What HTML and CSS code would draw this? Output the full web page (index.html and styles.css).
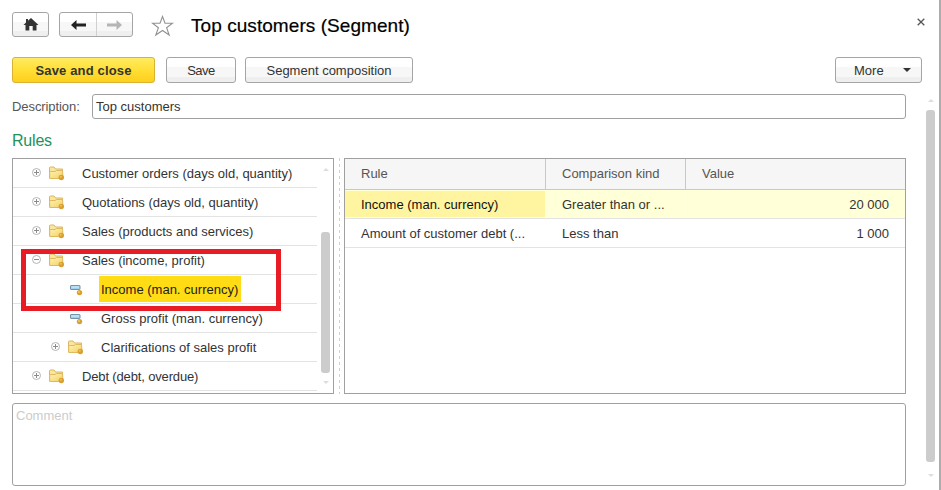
FILE: index.html
```
<!DOCTYPE html>
<html lang="en">
<head>
<meta charset="utf-8">
<title>Top customers (Segment)</title>
<link rel="stylesheet" href="styles.css">
</head>
<body>
<svg class="defs" width="0" height="0" aria-hidden="true">
  <defs>
    <linearGradient id="gold" x1="0" y1="0" x2="1" y2="1"><stop offset="0" stop-color="#fff3b5"/><stop offset="1" stop-color="#f3cf62"/></linearGradient>
    <symbol id="folder" viewBox="0 0 16 15">
      <path d="M.5 12V2Q.5 1 1.500 1H5L6.500 3H13.500V5" fill="#fbe79c" stroke="#d9b565"/>
      <path d="M.7 12.500V6.500Q.8 5.500 2 5.500H6L7.500 4.500H13.500L14 12.500Z" fill="url(#gold)" stroke="#dfb95f"/>
      <circle cx="12.300" cy="11.500" r="2.700" fill="#d9a02f"/><circle cx="11.800" cy="10.800" r="1" fill="#efc15b"/>
    </symbol>
    <symbol id="field" viewBox="0 0 13 11">
      <rect x=".5" y=".5" width="9.500" height="4" rx=".5" fill="#9fd0ef" stroke="#7592a6"/>
      <path d="M1.500 2H9" stroke="#d4eefb"/>
      <circle cx="9.500" cy="7.600" r="2.700" fill="#d9a02f"/><circle cx="9" cy="6.900" r="1" fill="#f0c767"/>
    </symbol>
    <symbol id="plus" viewBox="0 0 9 9"><circle cx="4.500" cy="4.500" r="4" fill="#fff" stroke="#b5b5b5"/><path d="M2 4.500H7M4.500 2V7" stroke="#8c8c8c"/></symbol>
    <symbol id="minus" viewBox="0 0 9 9"><circle cx="4.500" cy="4.500" r="4" fill="#fff" stroke="#b5b5b5"/><path d="M2 4.500H7" stroke="#8c8c8c"/></symbol>
  </defs>
</svg>
<main class="window">
  <div class="form">
    <header class="titlebar">
      <button class="btn home" aria-label="Home"><svg width="16" height="13" viewBox="0 0 16 13"><path d="M8 0L15.500 7H13.500V12.500H9.700V8H6.300V12.500H2.500V7H.5L3 4.600V1H5V2.800Z" fill="#333"/></svg></button>
      <div class="btn history">
        <button aria-label="Back"><svg width="15" height="10" viewBox="0 0 15 10"><path d="M0 5L5.500 0V3.500H15V6.500H5.500V10Z" fill="#222"/></svg></button>
        <button aria-label="Forward"><svg width="15" height="10" viewBox="0 0 15 10"><path d="M15 5L9.500 0V3.500H0V6.500H9.500V10Z" fill="#b5b5b5"/></svg></button>
      </div>
      <svg class="star" width="23" height="22" viewBox="0 0 23 22"><path d="M11.500 1.500L14 8.300H21.500L15.600 12.700L18.200 20L11.500 15.500L4.800 20L7.400 12.700L1.500 8.300H9Z" fill="#fff" stroke="#929292" stroke-width="1.100"/></svg>
      <h1>Top customers (Segment)</h1>
      <svg class="close" width="8" height="8" viewBox="0 0 8 8"><path d="M.7.7L7.300 7.300M7.300.7L.7 7.300" stroke="#555" stroke-width="1.300"/></svg>
    </header>
    <div class="commands">
      <button class="btn primary">Save and close</button>
      <button class="btn save">Save</button>
      <button class="btn compose">Segment composition</button>
      <button class="btn more"><span>More</span><i class="caret"></i></button>
    </div>
    <div class="description"><label>Description:</label><div class="input">Top customers</div></div>
    <h2>Rules</h2>
    <div class="panels">
      <section class="tree">
        <ul>
          <li><svg class="toggle"><use href="#plus"/></svg><svg class="folder"><use href="#folder"/></svg><span>Customer orders (days old, quantity)</span></li>
          <li><svg class="toggle"><use href="#plus"/></svg><svg class="folder"><use href="#folder"/></svg><span>Quotations (days old, quantity)</span></li>
          <li><svg class="toggle"><use href="#plus"/></svg><svg class="folder"><use href="#folder"/></svg><span>Sales (products and services)</span></li>
          <li><svg class="toggle"><use href="#minus"/></svg><svg class="folder"><use href="#folder"/></svg><span>Sales (income, profit)</span></li>
          <li class="leaf"><svg class="field"><use href="#field"/></svg><span class="selected">Income (man. currency)</span></li>
          <li class="leaf"><svg class="field"><use href="#field"/></svg><span>Gross profit (man. currency)</span></li>
          <li class="child"><svg class="toggle"><use href="#plus"/></svg><svg class="folder"><use href="#folder"/></svg><span>Clarifications of sales profit</span></li>
          <li><svg class="toggle"><use href="#plus"/></svg><svg class="folder"><use href="#folder"/></svg><span class="tight">Debt (debt, overdue)</span></li>
        </ul>
        <div class="scroll"><i class="up"></i><b></b><i class="down"></i></div>
        <div class="highlight"></div>
      </section>
      <div class="splitter"></div>
      <section class="table">
        <div class="row head"><div>Rule</div><div>Comparison kind</div><div>Value</div></div>
        <div class="row active"><div>Income (man. currency)</div><div>Greater than or ...</div><div class="num">20 000</div></div>
        <div class="row"><div>Amount of customer debt (...</div><div>Less than</div><div class="num">1 000</div></div>
      </section>
    </div>
    <div class="comment">Comment</div>
  </div>
  <div class="scroll page"><i class="up"></i><b></b><i class="down"></i></div>
</main>
</body>
</html>
```
FILE: styles.css
```
* { box-sizing: border-box; }
body { margin: 0; background: #fff; overflow: hidden; font: 13px/16px "Liberation Sans", Arial, sans-serif; color: #333; }
.defs { position: absolute; }
svg { display: block; flex: none; }
button { font: inherit; color: inherit; padding: 0; margin: 0; border: 0; background: none; }
.window { display: flex; width: 941px; height: 490px; border-right: 2px solid #adadad; }
.form { width: 906px; padding: 12px 0 0 12px; flex: none; }

.titlebar { display: flex; height: 25px; width: 914px; align-items: center; }
.btn { display: flex; align-items: center; justify-content: center; border: 1px solid #a5a5a5; border-radius: 3px; background: linear-gradient(#fff 0 38%, #f7f7f7 39% 78%, #efefef 79%); }
.home { width: 37px; height: 25px; }
.history { width: 74px; height: 25px; margin-left: 10px; }
.history button { width: 37px; height: 23px; display: flex; align-items: center; justify-content: center; }
.history button + button { border-left: 1px solid #d0d0d0; width: 36px; }
.star { margin: 2px 0 0 18px; }
h1 { margin: 2px 0 0 17px; font-size: 19px; line-height: 24px; font-weight: 400; color: #000; letter-spacing: .06px; -webkit-text-stroke: .2px #000; white-space: nowrap; }
.close { margin: -6px 1px 0 auto; }

.commands { display: flex; width: 910px; margin-top: 20px; height: 26px; }
.commands .btn { height: 26px; padding-top: 2px; }
.commands .primary { width: 143px; border-color: #d9b233; font-weight: 700; letter-spacing: .15px; background: linear-gradient(#ffec63, #ffdf35 50%, #ffcf1c); }
.commands .save { width: 70px; margin-left: 11px; letter-spacing: -.5px; }
.compose { width: 168px; margin-left: 9px; }
.commands .more { width: 87px; margin-left: auto; padding: 2px 10px 0 18px; justify-content: space-between; }
.caret { border: 4px solid transparent; border-top-color: #333; border-bottom: 0; margin-top: -2px; }

.description { display: flex; align-items: center; margin-top: 11px; height: 25px; }
.description label { width: 80px; color: #555; letter-spacing: -.08px; }
.input { flex: 1; height: 25px; border: 1px solid #a0a0a0; border-radius: 3px; padding: 4px 3px; }
h2 { margin: 12px 0 8px; font-size: 16px; line-height: 19px; font-weight: 400; color: #22925b; letter-spacing: -.2px; }

.panels { display: flex; height: 236px; }
.tree { position: relative; display: flex; width: 322px; border: 1px solid #a0a0a0; }
ul { list-style: none; margin: 0; padding: 0; width: 304px; }
li { display: flex; align-items: center; height: 29px; border-bottom: 1px solid #e3e3e3; padding-left: 19px; white-space: nowrap; }
li.child { padding-left: 38px; }
li.leaf { padding-left: 57px; }
.toggle { width: 9px; height: 9px; margin-top: -1px; }
.folder { width: 16px; height: 15px; margin: 0 17px 0 8px; }
.field { width: 13px; height: 11px; margin: 2px 16px 0 0; }
li span { padding: 1px 2px 0 0; }
.leaf span { padding-left: 2px; height: 26px; line-height: 25px; }
.leaf .selected { background: #ffdc13; color: #222; width: 142px; }
.tight { letter-spacing: -.15px; }
.scroll { display: flex; flex-direction: column; align-items: center; width: 9px; }
.scroll b { width: 9px; background: #ccc; border-radius: 3px; }
.scroll i { border: 3px solid transparent; }
.scroll .up { border-bottom-color: #ddd; border-top: 0; }
.scroll .down { border-top-color: #ddd; border-bottom: 0; }
.tree .scroll { margin-left: 4px; padding-top: 9px; }
.tree .scroll b { height: 141px; margin: 61px 0 8px; }
.highlight { position: absolute; left: 8px; top: 90px; width: 260px; height: 62px; border: 5px solid #e81c24; }
.splitter { width: 10px; background: repeating-linear-gradient(#d0d0d0 0 3px, #fff 3px 6px) 5px 0 / 1px 100% no-repeat; }
.table { flex: 1; border: 1px solid #a0a0a0; }
.row { display: grid; grid-template-columns: 201px 140px 1fr; height: 29px; border-bottom: 1px solid #e3e3e3; }
.row > div { padding: 7px 16px 0; white-space: nowrap; border-right: 1px solid transparent; }
.row > div:last-child { border-right: 0; }
.head { height: 31px; background: #f6f6f6; border-color: #c8c8c8; color: #555; }
.head > div { border-right-color: #c8c8c8; }
.active { background: #ffffd8; }
.active > div { border-right-color: #fffff0; }
.active > div:first-child { background: #fff49f padding-box; margin: 1px 0; padding-top: 6px; color: #111; }
.num { text-align: right; }
.comment { height: 83px; margin-top: 9px; border: 1px solid #a0a0a0; border-radius: 3px; padding: 4px 3px; color: #ccc; }
.page { margin-left: 20px; padding-top: 99px; }
.page b { height: 352px; margin: 8px 0 12px; }
```
